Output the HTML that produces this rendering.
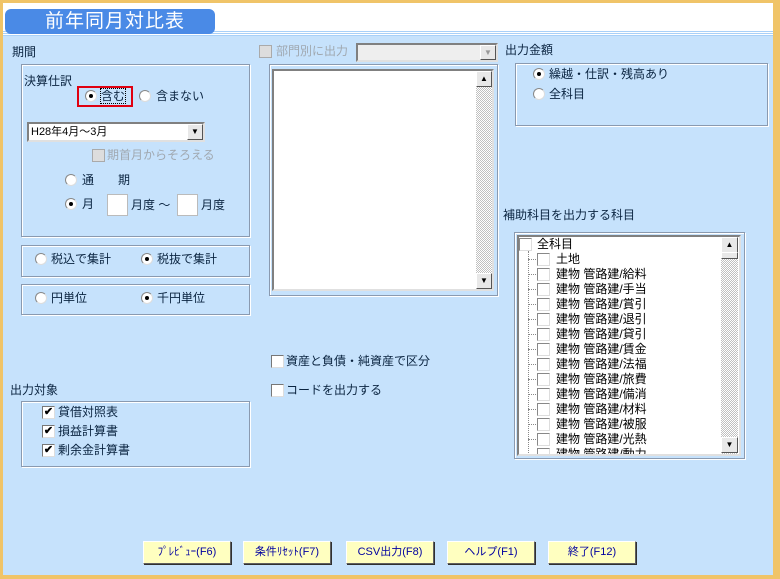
<!DOCTYPE html><html><head><meta charset="utf-8"><style>
*{margin:0;padding:0;box-sizing:border-box}
body{width:780px;height:579px;position:relative;background:#f0c468;font-family:"Liberation Sans","Noto Sans CJK JP",sans-serif;font-size:12px;color:#0a2440;overflow:hidden}
.a{position:absolute;white-space:nowrap;line-height:14px}
#main{position:absolute;left:3px;top:3px;width:770px;height:572px;background:#c6e2fc}
.grp{position:absolute;border:1px solid #8a9ab0;box-shadow:1px 1px 0 #fff inset,1px 1px 0 #fff}
.rb{position:absolute;width:12px;height:12px;border-radius:50%;background:#fff;border:1px solid #888;border-right-color:#ddd;border-bottom-color:#ddd}
.rb.on::after{content:"";position:absolute;left:3px;top:3px;width:4px;height:4px;border-radius:50%;background:#000}
.cb{position:absolute;width:13px;height:13px;background:#fff;border:1px solid #777;border-right-color:#ddd;border-bottom-color:#ddd;font-size:11px;line-height:11px;text-align:center;color:#000;font-weight:bold}
.sunk{position:absolute;background:#fff;border:2px solid #808080;border-right-color:#e0e0e0;border-bottom-color:#e0e0e0}
.btn{position:absolute;top:541px;width:88px;height:23px;background:#ffffc0;border:1px solid #fff;border-right-color:#606060;border-bottom-color:#606060;box-shadow:1px 1px 0 #303030;color:#0000a0;text-align:center;line-height:21px;font-size:11px}
.sb{position:absolute;background:repeating-conic-gradient(#c0c0c0 0 25%,#fff 0 50%) 0 0/2px 2px}
.arr{position:absolute;width:16px;height:16px;background:#e8e8e8;border:1px solid #fff;border-right-color:#555;border-bottom-color:#555;font-size:8px;text-align:center;line-height:14px;color:#000}
.row{position:absolute;left:0;height:15px;width:200px;color:#000;line-height:15px}
.row i{position:absolute;left:9px;top:7px;width:10px;border-top:1px dotted #888}
.row b{position:absolute;left:18px;top:1px;width:13px;height:13px;background:#fff;border:1px solid #888;border-right-color:#ddd;border-bottom-color:#ddd}
.row span{position:absolute;left:37px;top:0}
.gray{color:#a0a8b0}
</style></head><body>
<div id="main"></div>
<div class="a" style="left:3px;top:3px;width:770px;height:27px;background:#fff"></div>
<div class="a" style="left:3px;top:30px;width:770px;height:6px;background:repeating-linear-gradient(#fff 0 1px,#a8d0f8 1px 2px)"></div>
<div class="a" style="left:5px;top:9px;width:210px;height:25px;background:#4a8ae6;border-radius:6px;color:#fff;font-size:19px;line-height:25px;padding-left:40px;letter-spacing:1px">前年同月対比表</div>

<div class="a" style="left:12px;top:45px">期間</div>
<div class="grp" style="left:21px;top:64px;width:229px;height:173px"></div>
<div class="a" style="left:24px;top:74px">決算仕訳</div>
<div class="a" style="left:77px;top:86px;width:56px;height:21px;border:2px solid #e00010"></div>
<div class="rb on" style="left:85px;top:90px"></div><div class="a" style="left:101px;top:89px;outline:1px dotted #000">含む</div>
<div class="rb" style="left:139px;top:90px"></div><div class="a" style="left:156px;top:89px">含まない</div>
<div class="sunk" style="left:27px;top:122px;width:178px;height:20px;font-size:11px;line-height:16px;padding-left:2px;color:#000">H28年4月～3月</div>
<div class="arr" style="left:187px;top:124px;height:16px">▼</div>
<div class="cb" style="left:92px;top:149px;background:#ddd;border-color:#aaa"></div><div class="a gray" style="left:107px;top:148px">期首月からそろえる</div>
<div class="rb" style="left:65px;top:174px"></div><div class="a" style="left:82px;top:173px">通</div><div class="a" style="left:118px;top:173px">期</div>
<div class="rb on" style="left:65px;top:198px"></div><div class="a" style="left:82px;top:197px">月</div>
<div class="a" style="left:107px;top:194px;width:21px;height:22px;background:#fff;border:1px solid #bbb"></div>
<div class="a" style="left:131px;top:198px">月度 ～</div>
<div class="a" style="left:177px;top:194px;width:21px;height:22px;background:#fff;border:1px solid #bbb"></div>
<div class="a" style="left:201px;top:198px">月度</div>

<div class="grp" style="left:21px;top:245px;width:229px;height:32px"></div>
<div class="rb" style="left:35px;top:253px"></div><div class="a" style="left:51px;top:252px">税込で集計</div>
<div class="rb on" style="left:141px;top:253px"></div><div class="a" style="left:157px;top:252px">税抜で集計</div>
<div class="grp" style="left:21px;top:284px;width:229px;height:31px"></div>
<div class="rb" style="left:35px;top:292px"></div><div class="a" style="left:51px;top:291px">円単位</div>
<div class="rb on" style="left:141px;top:292px"></div><div class="a" style="left:157px;top:291px">千円単位</div>

<div class="a" style="left:10px;top:383px">出力対象</div>
<div class="grp" style="left:21px;top:401px;width:229px;height:66px"></div>
<div class="cb" style="left:42px;top:406px">✔</div><div class="a" style="left:58px;top:405px">貸借対照表</div>
<div class="cb" style="left:42px;top:425px">✔</div><div class="a" style="left:58px;top:424px">損益計算書</div>
<div class="cb" style="left:42px;top:444px">✔</div><div class="a" style="left:58px;top:443px">剰余金計算書</div>

<div class="cb" style="left:259px;top:45px;background:#ddd;border-color:#aaa"></div><div class="a gray" style="left:276px;top:44px">部門別に出力</div>
<div class="sunk" style="left:356px;top:43px;width:142px;height:19px;background:#eee"></div>
<div class="arr" style="left:480px;top:45px;height:15px;color:#999">▼</div>
<div class="grp" style="left:269px;top:64px;width:229px;height:232px"></div>
<div class="sunk" style="left:272px;top:69px;width:222px;height:222px"></div>
<div class="sb" style="left:476px;top:71px;width:16px;height:218px"></div>
<div class="arr" style="left:476px;top:71px">▲</div>
<div class="arr" style="left:476px;top:273px">▼</div>

<div class="cb" style="left:271px;top:355px"></div><div class="a" style="left:286px;top:354px">資産と負債・純資産で区分</div>
<div class="cb" style="left:271px;top:384px"></div><div class="a" style="left:286px;top:383px">コードを出力する</div>

<div class="a" style="left:505px;top:43px">出力金額</div>
<div class="grp" style="left:515px;top:63px;width:253px;height:63px"></div>
<div class="rb on" style="left:533px;top:68px"></div><div class="a" style="left:549px;top:67px">繰越・仕訳・残高あり</div>
<div class="rb" style="left:533px;top:88px"></div><div class="a" style="left:549px;top:87px">全科目</div>

<div class="a" style="left:503px;top:208px">補助科目を出力する科目</div>
<div class="grp" style="left:514px;top:232px;width:231px;height:227px"></div>
<div class="sunk" style="left:517px;top:235px;width:224px;height:221px"></div>
<div style="position:absolute;left:519px;top:237px;width:202px;height:217px;overflow:hidden">
<div class="row" style="top:0"><b style="left:0"></b><span style="left:18px">全科目</span></div>
<div style="position:absolute;left:9px;top:14px;height:210px;border-left:1px dotted #888"></div>
<div class="row" style="top:15px"><i></i><b></b><span>土地</span></div>
<div class="row" style="top:30px"><i></i><b></b><span>建物 管路建/給料</span></div>
<div class="row" style="top:45px"><i></i><b></b><span>建物 管路建/手当</span></div>
<div class="row" style="top:60px"><i></i><b></b><span>建物 管路建/賞引</span></div>
<div class="row" style="top:75px"><i></i><b></b><span>建物 管路建/退引</span></div>
<div class="row" style="top:90px"><i></i><b></b><span>建物 管路建/貸引</span></div>
<div class="row" style="top:105px"><i></i><b></b><span>建物 管路建/賃金</span></div>
<div class="row" style="top:120px"><i></i><b></b><span>建物 管路建/法福</span></div>
<div class="row" style="top:135px"><i></i><b></b><span>建物 管路建/旅費</span></div>
<div class="row" style="top:150px"><i></i><b></b><span>建物 管路建/備消</span></div>
<div class="row" style="top:165px"><i></i><b></b><span>建物 管路建/材料</span></div>
<div class="row" style="top:180px"><i></i><b></b><span>建物 管路建/被服</span></div>
<div class="row" style="top:195px"><i></i><b></b><span>建物 管路建/光熱</span></div>
<div class="row" style="top:210px"><i></i><b></b><span>建物 管路建/動力</span></div>
</div>
<div class="sb" style="left:721px;top:237px;width:17px;height:217px"></div>
<div class="arr" style="left:721px;top:237px;width:17px">▲</div>
<div class="arr" style="left:721px;top:252px;width:17px;height:7px"></div>
<div class="arr" style="left:721px;top:437px;width:17px">▼</div>

<div class="btn" style="left:143px">ﾌﾟﾚﾋﾞｭｰ(F6)</div>
<div class="btn" style="left:243px">条件ﾘｾｯﾄ(F7)</div>
<div class="btn" style="left:346px">CSV出力(F8)</div>
<div class="btn" style="left:447px">ヘルプ(F1)</div>
<div class="btn" style="left:548px">終了(F12)</div>
</body></html>
